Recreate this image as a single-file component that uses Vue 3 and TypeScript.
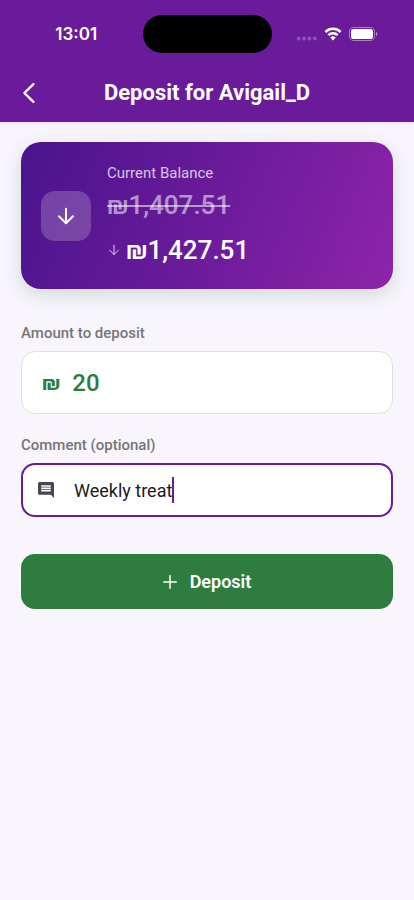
<script setup lang="ts">
import { computed, ref } from 'vue'

const account = 'Avigail_D'
const balance = 1407.51
const amount = ref('20')
const comment = ref('Weekly treat')

const format = (value: number): string =>
  '₪' + value.toLocaleString('en-US', { minimumFractionDigits: 2, maximumFractionDigits: 2 })

const nextBalance = computed(() => balance + (Number(amount.value) || 0))
</script>

<template>
  <div class="screen">
    <header class="top">
      <div class="status">
        <div class="side"><span class="time">13:01</span></div>
        <div class="island"></div>
        <div class="side signals">
          <svg width="21" height="14" viewBox="0 0 21 14" class="dots" aria-hidden="true">
            <circle cx="2.6" cy="11.5" r="1.9" /><circle cx="8" cy="11.5" r="1.9" />
            <circle cx="13.4" cy="11.5" r="1.9" /><circle cx="18.8" cy="11.5" r="1.9" />
          </svg>
          <svg class="wifi" width="18" height="14" viewBox="0 0 18 14" aria-hidden="true">
            <path d="M1.4 5a10.8 10.8 0 0 1 15.2 0M4.3 8.1a6.6 6.6 0 0 1 9.4 0" />
            <path class="solid" d="M9 13.4 6.2 10.6a4 4 0 0 1 5.6 0Z" />
          </svg>
          <svg width="29" height="14" viewBox="0 0 29 14" aria-hidden="true">
            <rect x="0.5" y="0.5" width="25" height="13" rx="4.2" fill="none" stroke="#fff" stroke-opacity="0.45" />
            <rect x="2" y="2" width="22" height="10" rx="2.8" fill="#fff" />
            <path d="M27 4.8c1.8.7 1.8 3.7 0 4.4Z" fill="#fff" fill-opacity="0.5" />
          </svg>
        </div>
      </div>
      <div class="nav">
        <button class="back" type="button" aria-label="Back">
          <svg width="16" height="22" viewBox="0 0 16 22" aria-hidden="true"><path d="M13.4 2.2 4.4 11l9 8.8" /></svg>
        </button>
        <h1>Deposit for {{ account }}</h1>
      </div>
    </header>

    <main class="content">
      <section class="card">
        <div class="badge">
          <svg width="18" height="18" viewBox="0 0 18 18" aria-hidden="true"><path d="M9 1.8v14M2 9.2l7 7 7-7" /></svg>
        </div>
        <div class="figures">
          <p class="caption">Current Balance</p>
          <p class="money old"><s>{{ format(balance) }}</s></p>
          <p class="money new">
            <svg width="12" height="12" viewBox="0 0 12 12" aria-hidden="true"><path d="M6 1.2v9.2M1.7 6.2 6 10.5l4.3-4.3" /></svg>
            <span>{{ format(nextBalance) }}</span>
          </p>
        </div>
      </section>

      <form @submit.prevent>
        <label class="label" for="amount">Amount to deposit</label>
        <div class="field amount">
          <span class="currency">₪</span>
          <input id="amount" v-model="amount" type="text" inputmode="decimal" />
        </div>

        <label class="label" for="comment">Comment (optional)</label>
        <div class="field comment">
          <svg width="16" height="16" viewBox="2 2 20 20" aria-hidden="true">
            <path d="M21.99 4c0-1.1-.89-2-1.99-2H4c-1.1 0-2 .9-2 2v12c0 1.1.9 2 2 2h14l4 4-.01-18zM18 14H6v-2h12v2zm0-3H6V9h12v2zm0-3H6V6h12v2z" />
          </svg>
          <input id="comment" v-model="comment" type="text" />
          <span class="caret"></span>
        </div>

        <button class="submit" type="submit">
          <svg width="14" height="14" viewBox="0 0 14 14" aria-hidden="true"><path d="M7 .7v12.6M.7 7h12.6" /></svg>
          <span>Deposit</span>
        </button>
      </form>
    </main>
  </div>
</template>

<style>
body {
  background: #f8f5fc;
}
</style>

<style scoped>
.screen {
  min-height: 100vh;
  background: #f8f5fc;
  font-family: Roboto, "Noto Sans", sans-serif;
  color: #1c1b1f;
}

.screen *,
.screen {
  box-sizing: border-box;
}

p,
h1 {
  margin: 0;
}

svg {
  display: block;
  flex: none;
}

.top {
  background: #6a1b9a;
  color: #fff;
  box-shadow: 0 1px 4px rgba(60, 30, 100, 0.1);
}

.status {
  display: grid;
  grid-template-columns: minmax(0, 1fr) 129px minmax(0, 1fr);
  align-items: center;
  height: 68px;
}

.side {
  display: flex;
  justify-content: center;
}

.time {
  font: 600 17px/24px Inter, sans-serif;
  padding-left: 10px;
}

.island {
  height: 38px;
  border-radius: 19px;
  background: #000;
}

.side.signals {
  gap: 7px;
  align-items: center;
  justify-content: flex-end;
  padding-right: 36px;
}

.dots {
  fill: #fff;
  fill-opacity: 0.25;
}

.wifi path {
  fill: none;
  stroke: #fff;
  stroke-width: 2.5;
}

.wifi .solid {
  fill: #fff;
  stroke: none;
}

.nav {
  display: grid;
  grid-template-columns: 58px 1fr 58px;
  align-items: center;
  height: 54px;
  padding-bottom: 4px;
}

.back {
  width: 58px;
  height: 44px;
  display: flex;
  align-items: center;
  padding: 0 0 0 20px;
  border: 0;
  background: none;
}

.back path {
  fill: none;
  stroke: #fff;
  stroke-width: 2.4;
  stroke-linecap: round;
  stroke-linejoin: round;
}

h1 {
  font-size: 22px;
  line-height: 28px;
  font-weight: 700;
  text-align: center;
  white-space: nowrap;
}

.content {
  padding: 20px 21px;
}

.card {
  display: flex;
  align-items: center;
  gap: 16px;
  padding: 21px 20px;
  border-radius: 20px;
  background: linear-gradient(112deg, #4a148c, #6a1b9a 50%, #8e24aa);
  color: #fff;
  box-shadow: 0 6px 18px rgba(46, 125, 60, 0.2);
}

.badge {
  width: 50px;
  height: 50px;
  border-radius: 14px;
  background: rgba(255, 255, 255, 0.2);
  display: grid;
  place-items: center;
}

.badge path,
.new path,
.submit path {
  fill: none;
  stroke: #fff;
  stroke-width: 2;
  stroke-linecap: round;
  stroke-linejoin: round;
}

.caption {
  font-size: 15px;
  line-height: 20px;
  color: rgba(255, 255, 255, 0.75);
}

.money {
  font-size: 26px;
  line-height: 36px;
  font-weight: 500;
}

.old {
  margin-top: 4px;
  color: rgba(255, 255, 255, 0.55);
}

.old s {
  text-decoration-thickness: 2px;
}

.new {
  display: flex;
  align-items: center;
  gap: 6px;
  margin-top: 9px;
  padding-left: 1px;
}

.new path {
  stroke-width: 1;
  stroke-opacity: 0.8;
}

form {
  display: flex;
  flex-direction: column;
  padding-top: 34px;
}

.label {
  font-size: 15px;
  line-height: 20px;
  font-weight: 500;
  color: #757575;
  margin-bottom: 8px;
}

.field {
  display: flex;
  align-items: center;
  background: #fff;
  border-radius: 14px;
}

.field input {
  min-width: 0;
  padding: 0;
  border: 0;
  outline: 0;
  background: none;
  color: inherit;
  font: inherit;
}

.amount {
  gap: 12px;
  height: 63px;
  margin-bottom: 21px;
  padding: 0 20px;
  border: 1px solid #e0e0e0;
  color: #2e7d3f;
  font-size: 24px;
  font-weight: 500;
}

.amount input {
  flex: 1;
}

.currency {
  font-size: 21px;
  font-weight: 700;
}

.comment {
  height: 54px;
  margin-bottom: 37px;
  padding: 0 15px;
  border: 2px solid #6a1b9a;
  font-size: 18px;
}

.comment svg {
  fill: #49454f;
}

.comment input {
  field-sizing: content;
  margin-left: 20px;
  caret-color: transparent;
}

.caret {
  width: 2px;
  height: 26px;
  background: #6a1b9a;
}

.submit {
  display: flex;
  align-items: center;
  justify-content: center;
  gap: 13px;
  height: 55px;
  border: 0;
  border-radius: 14px;
  background: #2e7d3f;
  color: #fff;
  font: 600 18px/24px Roboto, sans-serif;
}

.submit path {
  stroke-width: 1.5;
}
</style>
